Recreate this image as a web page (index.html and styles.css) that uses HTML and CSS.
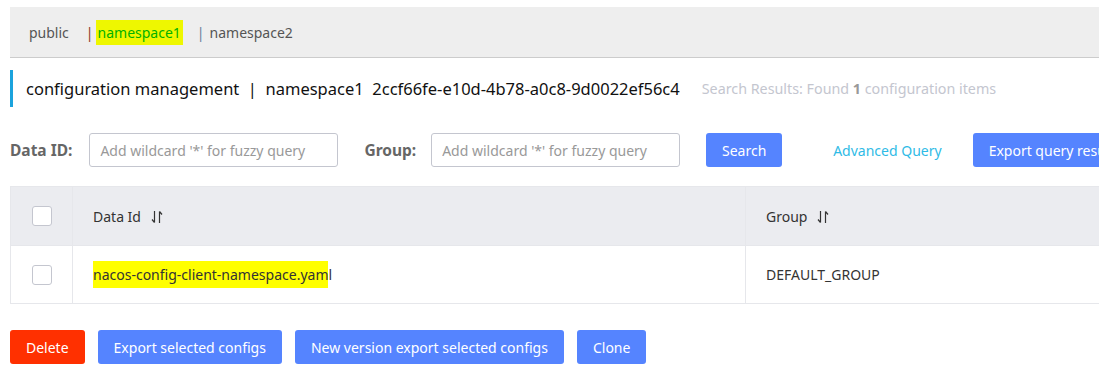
FILE: index.html
```html
<!DOCTYPE html>
<html lang="en">
<head>
  <meta charset="UTF-8">
  <title>Configuration Management</title>
  <link rel="stylesheet" href="styles.css">
</head>
<body>

<div class="page">
  <div class="namespace-bar">
    <span class="ns-item">public</span>
    <span class="ns-sep sep-red">|</span>
    <span class="ns-item ns-active"><mark class="marker">namespace1</mark></span>
    <span class="ns-sep">|</span>
    <span class="ns-item">namespace2</span>
  </div>

  <div class="title-row">
    <span class="title-text">configuration management&nbsp; | &nbsp;namespace1&nbsp; 2ccf66fe-e10d-4b78-a0c8-9d0022ef56c4</span>
    <span class="result-info">Search Results: Found <strong>1</strong> configuration items</span>
  </div>

  <div class="filter-row">
    <label class="filter-label">Data ID:</label>
    <input class="filter-input" type="text" placeholder="Add wildcard '*' for fuzzy query">
    <label class="filter-label">Group:</label>
    <input class="filter-input" type="text" placeholder="Add wildcard '*' for fuzzy query">
    <button class="btn btn-primary btn-search">Search</button>
    <a class="link-advanced" href="#">Advanced Query</a>
    <button class="btn btn-primary btn-export">Export query results</button>
  </div>

  <table class="config-table">
    <thead>
      <tr>
        <th class="col-check"><span class="checkbox"></span></th>
        <th class="col-id">Data Id <svg class="sort-icon" width="12" height="14" viewBox="0 0 12 14"><path d="M3.5 1v11.5M3.5 12.5L1 9.5M8.5 13V1.5M8.5 1.5L11 4.5" fill="none" stroke="#333" stroke-width="1.2"/></svg></th>
        <th class="col-group">Group <svg class="sort-icon" width="12" height="14" viewBox="0 0 12 14"><path d="M3.5 1v11.5M3.5 12.5L1 9.5M8.5 13V1.5M8.5 1.5L11 4.5" fill="none" stroke="#333" stroke-width="1.2"/></svg></th>
      </tr>
    </thead>
    <tbody>
      <tr>
        <td class="col-check"><span class="checkbox"></span></td>
        <td class="col-id"><mark class="marker marker-row">nacos-config-client-namespace.yam</mark>l</td>
        <td class="col-group">DEFAULT_GROUP</td>
      </tr>
    </tbody>
  </table>

  <div class="action-row">
    <button class="btn btn-danger">Delete</button>
    <button class="btn btn-primary">Export selected configs</button>
    <button class="btn btn-primary">New version export selected configs</button>
    <button class="btn btn-primary">Clone</button>
  </div>
</div>

</body>
</html>
```

FILE: styles.css
```css
body {
    margin: 0;
    font-family: 'Noto Sans', 'Open Sans', sans-serif;
    font-size: 14px;
    color: #333;
    background: #fff;
}
.page {
    padding: 7px 0 0 10px;
    height: 384px;
    overflow: hidden;
}
.namespace-bar {
    display: flex;
    align-items: center;
    height: 50px;
    background: #eeeeee;
    border-bottom: 1px solid #cccccc;
    padding-left: 19px;
    font-size: 14px;
    color: #555;
}
.ns-item {
    margin-right: 10px;
}
.ns-item:first-child {
    margin-right: 17px;
}
.ns-sep {
    color: #6b7f99;
    margin-right: 5px;
}
.ns-sep.sep-red {
    color: #8a3b22;
    margin-right: 2px;
}
.ns-active {
    color: #00b200;
    margin-right: 14px;
}
.marker {
    background: #eef700;
    color: inherit;
    padding: 3px 2px;
}
.title-row {
    display: flex;
    align-items: center;
    height: 37px;
    margin-top: 12px;
    border-left: 3px solid #1ba3dd;
    padding-left: 13px;
    white-space: nowrap;
}
.title-text {
    font-size: 16.5px;
    color: #111;
}
.result-info {
    margin-left: 22px;
    font-size: 14.3px;
    color: #c4c6cf;
}
.result-info strong {
    color: #999;
}
.filter-row {
    display: flex;
    align-items: center;
    margin-top: 26px;
    height: 34px;
    white-space: nowrap;
}
.filter-label {
    font-weight: bold;
    color: #666;
    font-size: 15.5px;
    margin-right: 17px;
}
.filter-input {
    flex: none;
    width: 249px;
    height: 34px;
    box-sizing: border-box;
    border: 1px solid #c4c6cf;
    border-radius: 3px;
    padding: 0 10px;
    font-family: inherit;
    font-size: 14px;
    margin-right: 26px;
}
.filter-input + .filter-label {
    margin-right: 15px;
}
.filter-input::placeholder {
    color: #999;
}
.btn {
    flex: none;
    height: 34px;
    border: none;
    border-radius: 3px;
    padding: 0 16px;
    font-family: inherit;
    font-size: 14px;
    color: #fff;
    cursor: pointer;
}
.btn-primary {
    background: #5584ff;
}
.btn-danger {
    background: #ff3000;
}
.btn-search {
    width: 76px;
    padding: 0;
}
.link-advanced {
    color: #2fbbe6;
    text-decoration: none;
    margin-left: 51px;
    margin-right: 31px;
}
.config-table {
    margin-top: 19px;
    width: 1100px;
    border-collapse: collapse;
    border: 1px solid #e6e7eb;
}
.config-table th,
.config-table td {
    text-align: left;
    font-weight: normal;
    border: 1px solid #e6e7eb;
    padding: 0 20px;
    font-size: 14px;
}
.config-table th {
    background: #ebecf0;
    height: 58px;
}
.config-table td {
    height: 57px;
}
.config-table .col-check {
    width: 62px;
    box-sizing: border-box;
    padding: 0 0 0 21px;
}
.config-table .col-id {
    width: 673px;
    box-sizing: border-box;
}
.checkbox {
    display: block;
    width: 18px;
    height: 18px;
    border: 1px solid #c4c6cf;
    border-radius: 3px;
    background: #fff;
}
.sort-icon {
    vertical-align: -2px;
    margin-left: 6px;
}
.marker-row {
    background: #ffff00;
    padding: 4px 0;
}
.action-row {
    display: flex;
    gap: 13px;
    margin-top: 26px;
}
```
